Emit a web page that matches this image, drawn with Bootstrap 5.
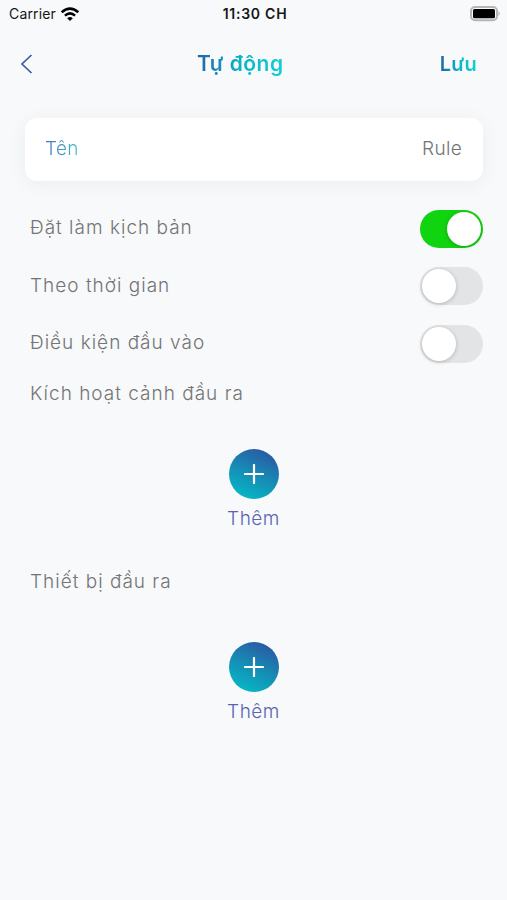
<!DOCTYPE html>
<html lang="vi">
<head>
<meta charset="utf-8">
<meta name="viewport" content="width=device-width, initial-scale=1">
<title>Tự động</title>
<link href="https://cdn.jsdelivr.net/npm/bootstrap@5.3.0/dist/css/bootstrap.min.css" rel="stylesheet">
<style>
body { background: #f7f9fb; color: #747474; font-family: Inter, "Liberation Sans", sans-serif; font-weight: 300; font-size: 19px; line-height: 24px; letter-spacing: .3px; }
.status-bar { display: grid; grid-template-columns: 1fr auto 1fr; height: 28px; padding: 0 6px 0 9px; color: #161616; font-size: 14px; font-weight: 400; letter-spacing: .15px; }
.status-time { font-weight: 600; letter-spacing: .75px; }
.title-bar { display: grid; grid-template-columns: 177px auto 1fr; height: 72px; padding: 0 30px 0 20px; font-size: 21px; font-weight: 600; }
.title-bar .grad-text { letter-spacing: .5px; }
.title-bar .save { font-size: 20px; letter-spacing: .3px; }
.grad-text { background: linear-gradient(90deg, #2462a6 0%, #08b5c5 50%, #14cfd2 100%); -webkit-background-clip: text; background-clip: text; color: transparent; }
.name-grad { background-image: linear-gradient(90deg, #3e73b8, #48bfd0); }
.name-card { margin: 18px 24px 0 25px; height: 63px; padding: 0 21px 1px 20px; border-radius: 12px; box-shadow: 0 3px 20px rgba(40,60,60,.055); }
.settings { padding-top: 19px; }
.setting { height: 57.5px; padding: 0 24px 0 30px; }
.setting label { letter-spacing: 1px; padding-bottom: 1px; }
.setting .form-switch { min-height: 0; height: 38px; }
.setting .form-check-input { width: 63px; height: 38px; border: 0; border-radius: 19px; background-color: #e3e4e5; background-image: none; box-shadow: none; display: flex; align-items: center; padding: 2px; }
.setting .form-check-input::before { content: ""; width: 34px; height: 34px; border-radius: 50%; background: #fff; box-shadow: 0 1px 4px rgba(0,0,0,.22); }
.setting .form-check-input:checked { background-color: #10d410; background-image: none; justify-content: flex-end; }
.scene-section { height: 188px; margin-top: 1px; }
.section-label { padding-left: 30px; letter-spacing: 1px; }
.add-btn { color: #5864b3; letter-spacing: .5px; margin-top: 48px; }
.scene-section .add-btn { margin-top: 43px; }
.add-circle { width: 50px; height: 50px; background: linear-gradient(205deg, #2d52a2 5%, #168bb4 50%, #04bdc8 95%); }
</style>
<script src="https://cdn.jsdelivr.net/npm/bootstrap@5.3.0/dist/js/bootstrap.bundle.min.js"></script>
</head>
<body>
<header>
  <div class="status-bar align-items-center">
    <div class="d-flex align-items-center gap-1"><span>Carrier</span>
      <svg width="20" height="15" viewBox="0 0 20 15"><g fill="none" stroke="#000" stroke-width="2.5"><path d="M1.7 5.2Q10-2 18.3 5.2"/><path d="M4.9 8.6Q10 4.1 15.1 8.6"/></g><path d="M7.2 11.2Q10 8.9 12.8 11.2L10 14Z"/></svg>
    </div>
    <span class="status-time">11:30 CH</span>
    <svg class="ms-auto" width="31" height="16" viewBox="0 0 31 16"><rect x="1" y="1" width="26" height="13.2" rx="4" fill="#f7f9fb" stroke="#b5b5b5" stroke-width="2"/><rect x="3" y="3" width="22" height="9.2" rx="1.5"/><path d="M28.5 5.3Q31 7.6 28.5 10Z" fill="#aaa"/></svg>
  </div>
  <nav class="title-bar align-items-center">
    <svg width="14" height="22" viewBox="0 0 14 22"><path d="M11.5 2L2 11L11.5 20" fill="none" stroke="#3d5aa6" stroke-width="1.7"/></svg>
    <span class="grad-text">Tự động</span>
    <span class="grad-text save ms-auto">Lưu</span>
  </nav>
</header>
<main>
  <div class="name-card bg-white d-flex align-items-center justify-content-between">
    <span class="grad-text name-grad">Tên</span><span>Rule</span>
  </div>
  <div class="settings">
    <div class="setting d-flex align-items-center justify-content-between"><label for="s1">Đặt làm kịch bản</label><div class="form-switch p-0"><input class="form-check-input m-0" type="checkbox" role="switch" id="s1" checked></div></div>
    <div class="setting d-flex align-items-center justify-content-between"><label for="s2">Theo thời gian</label><div class="form-switch p-0"><input class="form-check-input m-0" type="checkbox" role="switch" id="s2"></div></div>
    <div class="setting d-flex align-items-center justify-content-between"><label for="s3">Điều kiện đầu vào</label><div class="form-switch p-0"><input class="form-check-input m-0" type="checkbox" role="switch" id="s3"></div></div>
  </div>
  <section class="scene-section">
    <div class="section-label pt-2">Kích hoạt cảnh đầu ra</div>
    <div class="add-btn d-flex flex-column align-items-center">
      <div class="add-circle rounded-circle d-flex align-items-center justify-content-center"><svg width="20" height="20" viewBox="0 0 20 20"><path d="M10 1V19M1 10H19" stroke="#fff" stroke-width="2.2" stroke-linecap="round"/></svg></div>
      <span class="mt-2">Thêm</span>
    </div>
  </section>
  <section>
    <div class="section-label pt-2">Thiết bị đầu ra</div>
    <div class="add-btn d-flex flex-column align-items-center">
      <div class="add-circle rounded-circle d-flex align-items-center justify-content-center"><svg width="20" height="20" viewBox="0 0 20 20"><path d="M10 1V19M1 10H19" stroke="#fff" stroke-width="2.2" stroke-linecap="round"/></svg></div>
      <span class="mt-2">Thêm</span>
    </div>
  </section>
</main>
</body>
</html>
